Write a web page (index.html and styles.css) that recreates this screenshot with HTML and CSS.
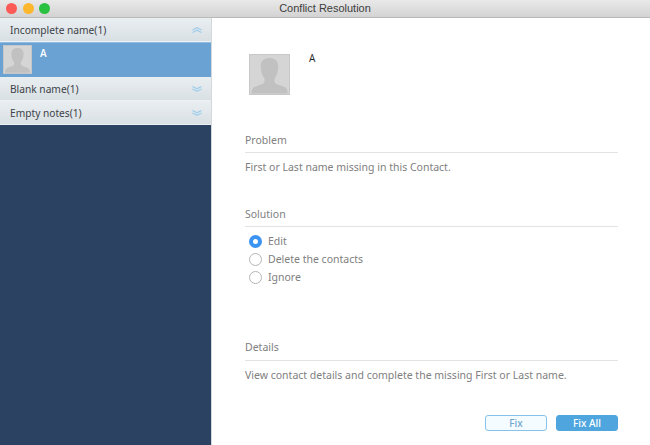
FILE: index.html
```html
<!DOCTYPE html>
<html lang="en">
<head>
<meta charset="utf-8">
<title>Conflict Resolution</title>
<link rel="stylesheet" href="styles.css">
</head>
<body>
<div class="window">
  <header class="titlebar">
    <div class="lights"><span class="light red"></span><span class="light yellow"></span><span class="light green"></span></div>
    <div class="title">Conflict Resolution</div>
  </header>
  <div class="main">
    <aside class="sidebar">
      <div class="group"><span>Incomplete name(1)</span>
        <svg class="chev" viewBox="0 0 10 6"><path d="M0.500 3L5 0.700L9.500 3M0.500 5.500L5 3.200L9.500 5.500"/></svg>
      </div>
      <div class="row">
        <svg class="avatar small" viewBox="0 0 40 40"><rect width="40" height="40" fill="#d5d5d5"/><path d="M20 3c-5.500 0-9 2.800-9 8.500 0 5 1.500 9.500 3.500 12 .8 1.500.8 4-.5 5.500-2.500 2-9 2.500-11.500 5.500-1 1.200-1 3-1 5h37c0-2 0-3.800-1-5-2.500-3-9-3.500-11.500-5.500-1.300-1.500-1.300-4-.5-5.500 2-2.500 3.500-7 3.500-12C29 5.800 25.500 3 20 3z" fill="#c1c1c1"/></svg>
        <span class="rowname">A</span>
      </div>
      <div class="group"><span>Blank name(1)</span>
        <svg class="chev" viewBox="0 0 10 6"><path d="M0.500 0.500L5 2.800L9.500 0.500M0.500 3L5 5.300L9.500 3"/></svg>
      </div>
      <div class="group"><span>Empty notes(1)</span>
        <svg class="chev" viewBox="0 0 10 6"><path d="M0.500 0.500L5 2.800L9.500 0.500M0.500 3L5 5.300L9.500 3"/></svg>
      </div>
    </aside>
    <section class="content">
      <div class="contact">
        <svg class="avatar large" viewBox="0 0 40 40"><rect width="40" height="40" fill="#d5d5d5"/><path d="M20 3c-5.500 0-9 2.800-9 8.500 0 5 1.500 9.500 3.500 12 .8 1.500.8 4-.5 5.500-2.500 2-9 2.500-11.500 5.500-1 1.200-1 3-1 5h37c0-2 0-3.800-1-5-2.500-3-9-3.500-11.500-5.500-1.300-1.500-1.300-4-.5-5.500 2-2.500 3.500-7 3.500-12C29 5.800 25.500 3 20 3z" fill="#c1c1c1"/></svg>
        <span class="contactname">A</span>
      </div>
      <div class="section problem">
        <h2>Problem</h2>
        <p>First or Last name missing in this Contact.</p>
      </div>
      <div class="section solution">
        <h2>Solution</h2>
        <div class="options">
          <div class="opt"><span class="radio on"></span>Edit</div>
          <div class="opt"><span class="radio"></span>Delete the contacts</div>
          <div class="opt"><span class="radio"></span>Ignore</div>
        </div>
      </div>
      <div class="section details">
        <h2>Details</h2>
        <p>View contact details and complete the missing First or Last name.</p>
      </div>
      <div class="actions">
        <button class="btn outline">Fix</button>
        <button class="btn solid">Fix All</button>
      </div>
    </section>
  </div>
</div>
</body>
</html>
```
FILE: styles.css
```css
* { box-sizing: border-box; }
html, body { margin: 0; padding: 0; }
body { width: 650px; height: 445px; overflow: hidden; background: #fff; font-family: "Open Sans", "Liberation Sans", sans-serif; }
.window { width: 650px; height: 445px; display: flex; flex-direction: column; }
.titlebar { height: 18px; flex: none; display: flex; align-items: center; position: relative; background: linear-gradient(#e9e9e9, #d3d3d3); border-bottom: 1px solid #b9b9b9; }
.lights { display: flex; gap: 5.500px; padding-left: 6px; }
.light { width: 11px; height: 11px; border-radius: 50%; }
.red { background: #fc5a56; }
.yellow { background: #fdb72e; }
.green { background: #2ac140; }
.title { position: absolute; left: 0; right: 0; top: 0; text-align: center; font: 11px/17px "Liberation Sans", sans-serif; color: #3d3d3d; }
.main { flex: 1; display: flex; min-height: 0; }
.sidebar { width: 212px; flex: none; background: #2c4263; border-right: 1px solid #d5d8da; }
.group { height: 24px; display: flex; align-items: center; justify-content: space-between; padding: 0 9px 0 10px; font: 10.200px "Noto Sans", sans-serif; color: #3c4248; background: linear-gradient(#e9eef1, #d9e0e4); border-bottom: 1px solid #eef1f3; }
.chev { width: 10px; height: 6px; fill: none; stroke: #9fcdea; stroke-width: 1.200; }
.row { height: 35px; display: flex; align-items: flex-start; background: #6aa2d4; border-top: 1px solid #8fbce0; padding: 2px 0 0 3px; }
.avatar { display: block; flex: none; border: 1px solid #c7c7c7; }
.small { width: 29px; height: 29px; }
.rowname { margin: 1px 0 0 8px; font: 600 10px/14px "Open Sans", sans-serif; color: #fff; }
.content { flex: 1; padding: 36px 32px 0 33px; display: flex; flex-direction: column; min-width: 0; }
.contact { display: flex; align-items: flex-start; height: 41px; padding-left: 4px; }
.large { width: 41px; height: 41px; }
.contactname { margin: -3px 0 0 19px; font: 10px/14px "Open Sans", sans-serif; color: #222; }
.section h2 { margin: 0; height: 20px; font: 400 10.500px/14px "Noto Sans", sans-serif; color: #808080; border-bottom: 1px solid #e3e3e3; }
.section p { margin: 7px 0 0; font: 10.500px/15px "Noto Sans", sans-serif; color: #808080; }
.problem { margin-top: 38px; }
.solution { margin-top: 32px; }
.options { margin-top: 7px; padding-left: 4px; display: flex; flex-direction: column; gap: 4px; }
.opt { height: 14px; display: flex; align-items: center; gap: 6px; font: 10.500px/14px "Noto Sans", sans-serif; color: #808080; }
.radio { width: 13px; height: 13px; border-radius: 50%; border: 1px solid #b5b5b5; background: #fff; flex: none; }
.radio.on { border: 4.500px solid #3b93f2; background: #fff; }
.details { margin-top: 56px; }
.details h2 { height: 21px; }
.actions { margin-top: 32px; display: flex; justify-content: flex-end; gap: 9px; }
.btn { width: 62px; height: 16px; padding: 0; border-radius: 3px; font: 10px/14px "Noto Sans", sans-serif; }
.outline { background: #f5fcff; border: 1.500px solid #86c3ea; color: #6fa6cc; font-weight: 500; }
.solid { background: #4fa6de; border: 1px solid #4fa6de; color: #fff; font-weight: 500; }
```
